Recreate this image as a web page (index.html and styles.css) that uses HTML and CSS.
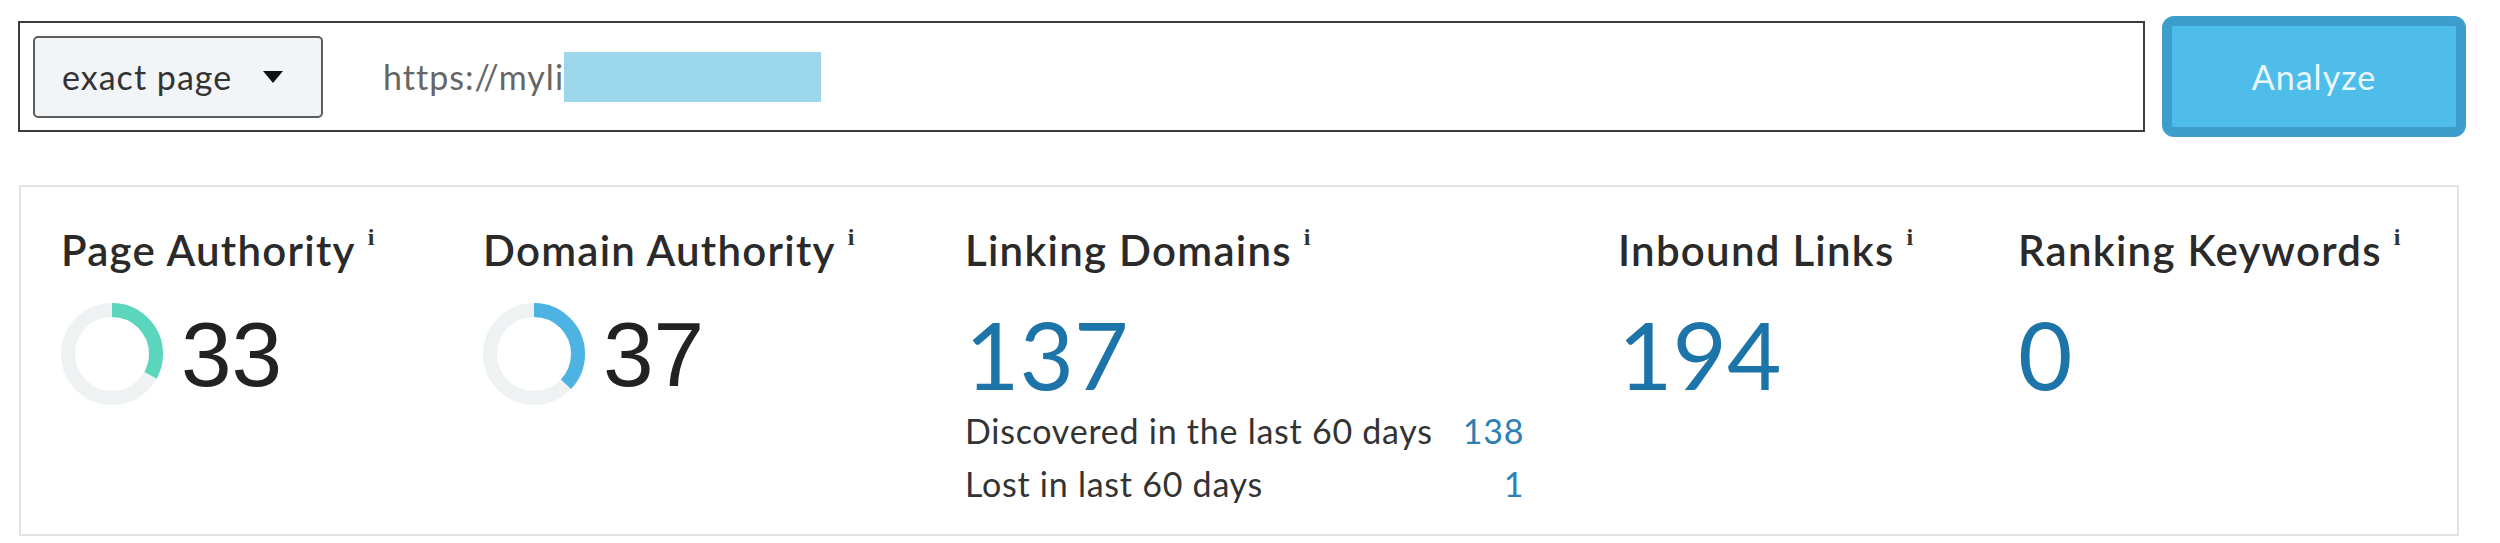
FILE: index.html
```html
<!DOCTYPE html>
<html lang="en">
<head>
<meta charset="utf-8">
<title>Link Explorer</title>
<link rel="stylesheet" href="styles.css">
</head>
<body>
<div class="page">
  <div class="search-row">
    <div class="search-box">
      <div class="scope-select"><span>exact page</span><span class="caret"></span></div>
      <div class="url"><span class="url-text">https://myli</span><span class="redact"></span></div>
    </div>
    <button class="analyze">Analyze</button>
  </div>

  <div class="metrics">
    <div class="metric">
      <div class="metric-label">Page Authority<span class="info">i</span></div>
      <div class="metric-value">
        <svg class="ring" viewBox="0 0 102 102" width="102" height="102">
          <circle cx="51" cy="51" r="44" class="ring-track"/>
          <circle cx="51" cy="51" r="44" class="ring-arc ring-pa" stroke-dasharray="91.2 300" transform="rotate(-90 51 51)"/>
        </svg>
        <span class="score">33</span>
      </div>
    </div>
    <div class="metric">
      <div class="metric-label">Domain Authority<span class="info">i</span></div>
      <div class="metric-value">
        <svg class="ring" viewBox="0 0 102 102" width="102" height="102">
          <circle cx="51" cy="51" r="44" class="ring-track"/>
          <circle cx="51" cy="51" r="44" class="ring-arc ring-da" stroke-dasharray="102.3 300" transform="rotate(-90 51 51)"/>
        </svg>
        <span class="score">37</span>
      </div>
    </div>
    <div class="metric">
      <div class="metric-label">Linking Domains<span class="info">i</span></div>
      <div class="metric-value"><span class="count">137</span></div>
      <div class="sub">
        <span class="sub-label">Discovered in the last 60 days</span><span class="sub-num">138</span>
        <span class="sub-label">Lost in last 60 days</span><span class="sub-num">1</span>
      </div>
    </div>
    <div class="metric">
      <div class="metric-label">Inbound Links<span class="info">i</span></div>
      <div class="metric-value"><span class="count">194</span></div>
    </div>
    <div class="metric">
      <div class="metric-label">Ranking Keywords<span class="info">i</span></div>
      <div class="metric-value"><span class="count">0</span></div>
    </div>
  </div>
</div>
</body>
</html>
```

FILE: styles.css
```css
* { box-sizing: border-box; }

body {
  margin: 0;
  background: #ffffff;
  font-family: Lato, "Liberation Sans", sans-serif;
  color: #2b2b2b;
}

.page {
  padding: 16px 34px 0 18px;
}

/* ---------- search row ---------- */
.search-row {
  display: flex;
  align-items: center;
  gap: 17px;
  height: 121px;
}

.search-box {
  flex: 1;
  height: 111px;
  border: 2px solid #3c3c3c;
  display: flex;
  align-items: center;
  padding-left: 13px;
  background: #fff;
}

.scope-select {
  width: 290px;
  height: 82px;
  border: 2px solid #5c5c5c;
  border-radius: 5px;
  background: #f1f5f7;
  display: flex;
  align-items: center;
  justify-content: space-between;
  padding: 0 38px 0 27px;
  font-size: 34px;
  letter-spacing: 0.03em;
  color: #333;
}

.caret {
  width: 0;
  height: 0;
  border-left: 10px solid transparent;
  border-right: 10px solid transparent;
  border-top: 12px solid #111;
}

.url {
  margin-left: 60px;
  display: flex;
  align-items: center;
  font-size: 34px;
  letter-spacing: 0.03em;
  color: #666;
}

.redact {
  width: 257px;
  height: 50px;
  background: #9bd6ea;
}

.analyze {
  width: 304px;
  height: 121px;
  border: 10px solid #3d9dcc;
  border-radius: 12px;
  background: #4fbdea;
  color: #eaf8ff;
  font-family: Lato, "Liberation Sans", sans-serif;
  font-size: 34px;
  letter-spacing: 0.03em;
  padding: 0;
}

/* ---------- metrics panel ---------- */
.metrics {
  margin-top: 48px;
  margin-left: 1px;
  width: 2440px;
  border: 2px solid #e3e3e3;
  display: grid;
  grid-template-columns: 422px 482px 653px 400px 1fr;
  padding: 38px 40px 24px 40px;
}

.metric-label {
  font-size: 42px;
  font-weight: 600;
  line-height: 50px;
  letter-spacing: 0.03em;
  color: #2a2a2a;
  white-space: nowrap;
}

.info {
  font-family: "Liberation Serif", "DejaVu Serif", serif;
  font-size: 24px;
  font-weight: 700;
  line-height: 0;
  vertical-align: 21px;
  margin-left: 12px;
  color: #333;
}

.metric-value {
  display: flex;
  align-items: center;
  height: 104px;
  margin-top: 27px;
}

.ring {
  display: block;
  flex: none;
}

.ring-track {
  fill: none;
  stroke: #eef2f3;
  stroke-width: 14;
}

.ring-arc {
  fill: none;
  stroke-width: 14;
}

.ring-pa { stroke: #5bd6bd; }
.ring-da { stroke: #4cb3e2; }

.score {
  font-family: "Liberation Sans", Arial, sans-serif;
  font-size: 91px;
  line-height: 1;
  color: #222;
  margin-left: 18px;
}

.count {
  font-family: Lato, "Liberation Sans", sans-serif;
  font-size: 94px;
  line-height: 1;
  color: #1c74a9;
}

.sub {
  display: grid;
  grid-template-columns: auto auto;
  column-gap: 30px;
  width: max-content;
  font-size: 34px;
  line-height: 53px;
  letter-spacing: 0.022em;
  margin-top: -2px;
  color: #333;
}

.sub-num {
  text-align: right;
  color: #2d7fb4;
}
```
